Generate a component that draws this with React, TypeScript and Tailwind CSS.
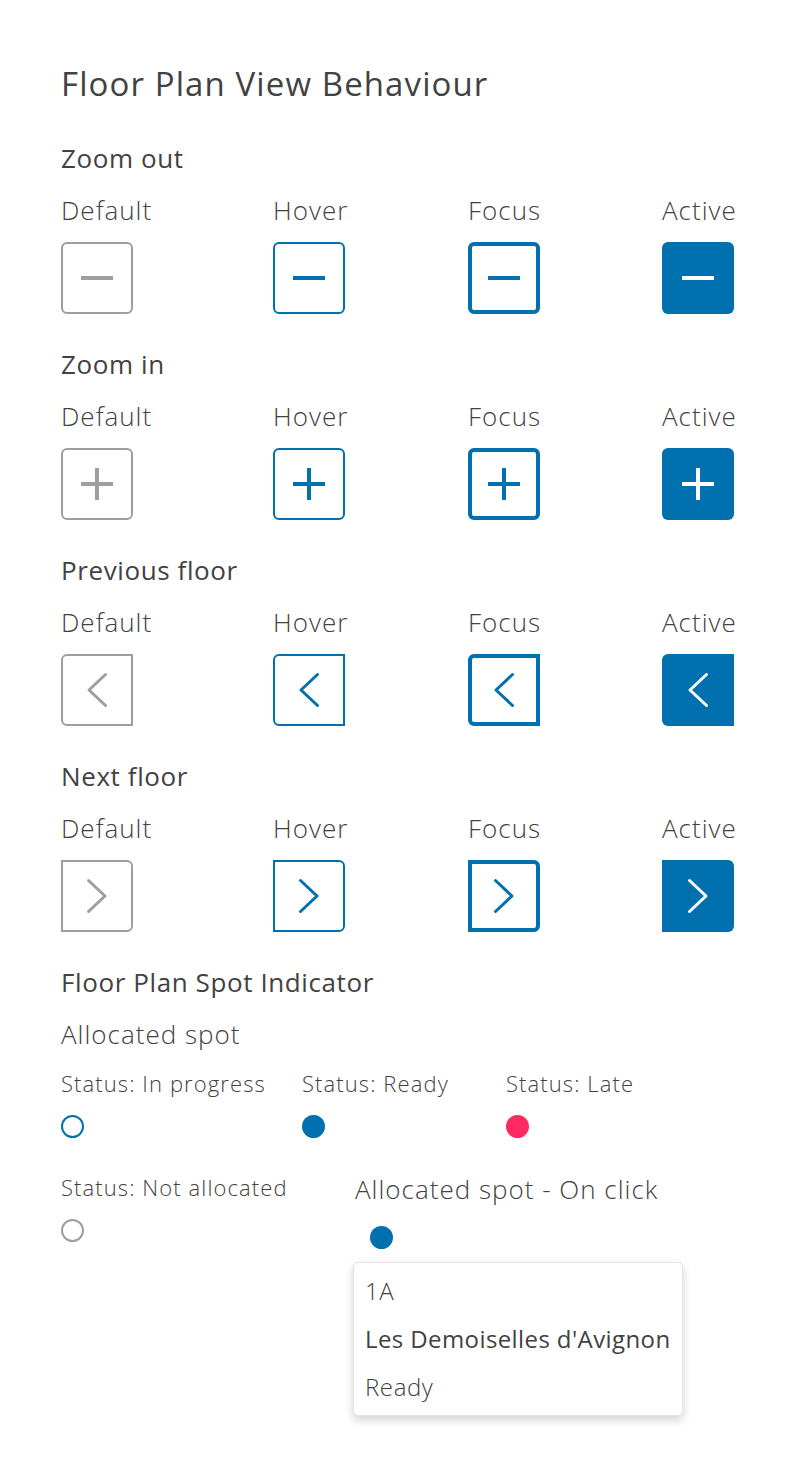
const BLUE = '#0070ae';

type Kind = 'minus' | 'plus' | 'prev' | 'next';
type State = 'default' | 'hover' | 'focus' | 'active';

const STATES: { key: State; label: string }[] = [
  { key: 'default', label: 'Default' },
  { key: 'hover', label: 'Hover' },
  { key: 'focus', label: 'Focus' },
  { key: 'active', label: 'Active' },
];

function Glyph({ kind, color }: { kind: Kind; color: string }) {
  if (kind === 'minus') {
    return (
      <svg width="32" height="32" viewBox="0 0 32 32">
        <rect x="0" y="14" width="32" height="4" fill={color} />
      </svg>
    );
  }
  if (kind === 'plus') {
    return (
      <svg width="32" height="32" viewBox="0 0 32 32">
        <rect x="0" y="14" width="32" height="4" fill={color} />
        <rect x="14" y="0" width="4" height="32" fill={color} />
      </svg>
    );
  }
  const d = kind === 'prev' ? 'M20.5 2.5 L4 18 L20.5 33.5' : 'M3.5 2.5 L20 18 L3.5 33.5';
  return (
    <svg width="24" height="36" viewBox="0 0 24 36" fill="none">
      <path d={d} stroke={color} strokeWidth="3" strokeLinecap="round" strokeLinejoin="round" />
    </svg>
  );
}

function ControlButton({ kind, state }: { kind: Kind; state: State }) {
  const shape =
    kind === 'prev' ? 'rounded-l-[6px]' : kind === 'next' ? 'rounded-r-[6px]' : 'rounded-[6px]';
  const look =
    state === 'default'
      ? 'border-2 border-[#9e9e9e] bg-white'
      : state === 'hover'
        ? 'border-2 border-[#0070ae] bg-white'
        : state === 'focus'
          ? 'border-4 border-[#0070ae] bg-white'
          : 'bg-[#0070ae]';
  const color = state === 'default' ? '#9e9e9e' : state === 'active' ? '#ffffff' : BLUE;
  return (
    <div className={`w-[72px] h-[72px] flex items-center justify-center ${shape} ${look}`}>
      <Glyph kind={kind} color={color} />
    </div>
  );
}

function ControlSection({ title, kind, first }: { title: string; kind: Kind; first?: boolean }) {
  return (
    <section className={first ? 'mt-[36px]' : 'mt-[32px]'}>
      <h2 className="text-[26px] leading-[36px] font-normal tracking-[0.6px]">{title}</h2>
      <div className="mt-[16px] grid grid-cols-[212px_195px_194px_1fr]">
        {STATES.map((s) => (
          <div key={s.key} className="flex flex-col">
            <span className="text-[26px] leading-[36px] font-light tracking-[1px] whitespace-nowrap">{s.label}</span>
            <div className="mt-[14px]">
              <ControlButton kind={kind} state={s.key} />
            </div>
          </div>
        ))}
      </div>
    </section>
  );
}

function Dot({ variant }: { variant: 'outline' | 'filled' | 'late' | 'empty' }) {
  const cls =
    variant === 'outline'
      ? 'border-2 border-[#0070ae]'
      : variant === 'filled'
        ? 'bg-[#0070ae]'
        : variant === 'late'
          ? 'bg-[#ff2a5f]'
          : 'border-2 border-[#9e9e9e]';
  return <div className={`w-[23px] h-[23px] rounded-full ${cls}`} />;
}

function Status({ label, variant, width }: { label: string; variant: 'outline' | 'filled' | 'late' | 'empty'; width: string }) {
  return (
    <div className={`flex flex-col ${width}`}>
      <span className="text-[22px] leading-[30px] font-light tracking-[1.1px] whitespace-nowrap">{label}</span>
      <div className="mt-[17px]">
        <Dot variant={variant} />
      </div>
    </div>
  );
}

export default function App() {
  return (
    <div className="min-h-screen bg-white font-['Open_Sans','Noto_Sans',sans-serif] text-[#424242] px-[61px] pt-[64px] pb-[60px]">
      <h1 className="text-[33px] leading-[40px] font-normal tracking-[1.1px]">Floor Plan View Behaviour</h1>

      <ControlSection title="Zoom out" kind="minus" first />
      <ControlSection title="Zoom in" kind="plus" />
      <ControlSection title="Previous floor" kind="prev" />
      <ControlSection title="Next floor" kind="next" />

      <section className="mt-[32px]">
        <h2 className="text-[26px] leading-[36px] font-normal tracking-[0.6px]">Floor Plan Spot Indicator</h2>
        <p className="mt-[16px] text-[26px] leading-[36px] font-light tracking-[1px]">Allocated spot</p>

        <div className="mt-[16px] flex flex-row">
          <Status label="Status: In progress" variant="outline" width="w-[241px]" />
          <Status label="Status: Ready" variant="filled" width="w-[204px]" />
          <Status label="Status: Late" variant="late" width="w-[200px]" />
        </div>

        <div className="mt-[34px] flex flex-row items-start">
          <Status label="Status: Not allocated" variant="empty" width="w-[294px]" />
          <div className="flex flex-col -mt-[1px]">
            <span className="text-[26px] leading-[36px] font-light tracking-[1px] whitespace-nowrap">Allocated spot - On click</span>
            <div className="mt-[19px] ml-[15px]">
              <Dot variant="filled" />
            </div>
            <div className="mt-[13px] -ml-[2px] w-[330px] rounded-[5px] border border-[#e4e4e4] bg-white py-1 px-[11px] shadow-[0_4px_10px_rgba(0,0,0,0.18)]">
              <p className="text-[24px] leading-[48px] font-light tracking-[0.6px]">1A</p>
              <p className="text-[24px] leading-[48px] font-normal tracking-[0.4px] whitespace-nowrap">Les Demoiselles d'Avignon</p>
              <p className="text-[24px] leading-[48px] font-light tracking-[0.6px]">Ready</p>
            </div>
          </div>
        </div>
      </section>
    </div>
  );
}
